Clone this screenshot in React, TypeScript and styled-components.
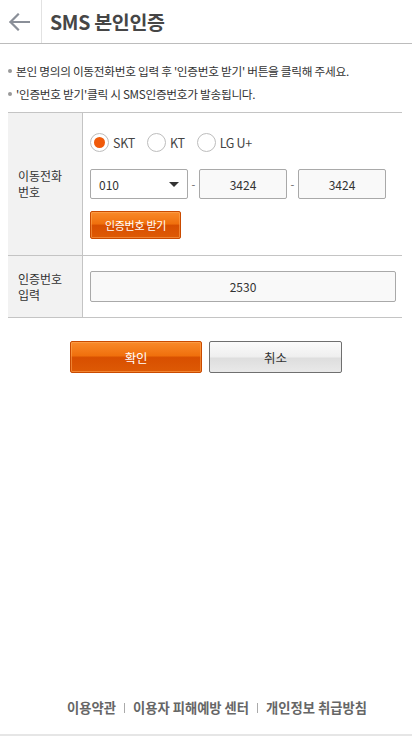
import React from "react";
import styled, { createGlobalStyle } from "styled-components";

const Global = createGlobalStyle`
  html, body { margin: 0; padding: 0; background: #fff; }
  body { font-family: "Noto Sans CJK KR", "Noto Sans", sans-serif; color: #333; }
  * { box-sizing: border-box; }
`;

const Page = styled.div`
  min-height: 736px;
  display: flex;
  flex-direction: column;
`;

const Header = styled.header`
  height: 44px;
  display: flex;
  align-items: stretch;
  border-bottom: 1px solid #bcbcbc;
`;

const Back = styled.button`
  width: 42px;
  border: none;
  border-right: 1px solid #e2e2e2;
  background: none;
  padding: 0 4px 0 0;
  display: flex;
  align-items: center;
  justify-content: center;
`;

const Title = styled.h1`
  margin: 0;
  padding-left: 8px;
  display: flex;
  align-items: center;
  font-size: 19.5px;
  font-weight: 700;
  color: #464646;
  letter-spacing: -0.3px;
`;

const Notes = styled.ul`
  list-style: none;
  margin: 0;
  padding: 15px 8px 0 8px;
`;

const Note = styled.li`
  font-size: 11.7px;
  line-height: 23px;
  color: #333;
  letter-spacing: -0.3px;
  display: flex;
  align-items: center;
  &::before {
    content: "";
    width: 4px;
    height: 4px;
    border-radius: 50%;
    background: #999;
    margin: 0 4px 0 0;
  }
`;

const Table = styled.div`
  margin: 7px 10px 0 8px;
  border-top: 1px solid #c4c4c4;
`;

const Row = styled.div`
  display: grid;
  grid-template-columns: 75px 1fr;
  border-bottom: 1px solid #c4c4c4;
`;

const Label = styled.div`
  background: #f2f2f2;
  border-right: 1px solid #c4c4c4;
  display: flex;
  flex-direction: column;
  justify-content: center;
  padding-left: 10px;
  font-size: 12px;
  line-height: 16px;
  color: #333;
`;

const Cell = styled.div<{ $pad: string }>`
  padding: ${(p) => p.$pad};
  display: flex;
  flex-direction: column;
  align-items: flex-start;
`;

const Radios = styled.div`
  display: flex;
  align-items: center;
  height: 18px;
  margin-bottom: 18px;
`;

const RadioItem = styled.label`
  display: flex;
  align-items: center;
  font-size: 12.5px;
  color: #444;
  margin-right: 12px;
  letter-spacing: -0.3px;
`;

const RadioCircle = styled.span<{ $on?: boolean }>`
  width: 19px;
  height: 19px;
  border-radius: 50%;
  border: 1px solid #bdbdbd;
  background: #fff;
  margin-right: 4px;
  display: flex;
  align-items: center;
  justify-content: center;
  &::after {
    content: "";
    width: 11px;
    height: 11px;
    border-radius: 50%;
    background: ${(p) => (p.$on ? "#f05a0a" : "transparent")};
  }
`;

const PhoneRow = styled.div`
  display: flex;
  align-items: center;
  margin-bottom: 12px;
`;

const Select = styled.div`
  width: 98px;
  height: 30px;
  border: 1px solid #a9a9a9;
  border-radius: 2px;
  background: #fff;
  display: flex;
  align-items: center;
  justify-content: space-between;
  padding: 0 8px 0 8px;
  font-size: 12px;
  color: #333;
`;

const Triangle = styled.span`
  width: 0;
  height: 0;
  border-left: 5px solid transparent;
  border-right: 5px solid transparent;
  border-top: 5px solid #333;
`;

const Dash = styled.span`
  width: 11px;
  text-align: center;
  font-size: 11px;
  color: #666;
`;

const Field = styled.div<{ $w: string; $h: number }>`
  width: ${(p) => p.$w};
  height: ${(p) => p.$h}px;
  border: 1px solid #a9a9a9;
  border-radius: 2px;
  background: #f9f9f9;
  display: flex;
  align-items: center;
  justify-content: center;
  font-size: 12px;
  color: #333;
`;

const OrangeBtn = styled.button<{ $w: number; $h: number; $fs: number }>`
  width: ${(p) => p.$w}px;
  height: ${(p) => p.$h}px;
  border: 1px solid #c94a00;
  border-radius: 2px;
  background: linear-gradient(to bottom, #f98a2a 0%, #f0700d 45%, #d84f00 52%, #de5a05 100%);
  box-shadow: inset 0 0 0 1px rgba(255, 170, 90, 0.55);
  color: #fff;
  font-family: inherit;
  font-size: ${(p) => p.$fs}px;
  padding: 0;
  letter-spacing: -0.3px;
`;

const GrayBtn = styled.button`
  width: 133px;
  height: 32px;
  border: 1px solid #6f6f6f;
  border-radius: 2px;
  background: linear-gradient(to bottom, #fbfbfb 0%, #efefef 48%, #dedede 55%, #e9e9e9 100%);
  color: #333;
  font-family: inherit;
  font-size: 12.5px;
  padding: 0;
`;

const Actions = styled.div`
  display: flex;
  justify-content: center;
  gap: 7px;
  margin-top: 23px;
`;

const Spacer = styled.div`
  flex: 1;
`;

const Footer = styled.footer`
  display: flex;
  justify-content: center;
  align-items: center;
  padding: 0 0 10px 22px;
  border-bottom: 2px solid #e6e6e6;
  height: 45px;
`;

const FootLink = styled.span`
  font-size: 13.3px;
  font-weight: 700;
  color: #666;
  letter-spacing: 0;
`;

const Sep = styled.span`
  width: 1px;
  height: 10px;
  background: #aaa;
  margin: 0 8px;
`;

export default function App() {
  return (
    <Page>
      <Global />
      <Header>
        <Back aria-label="back">
          <svg width="22" height="18" viewBox="0 0 22 18" fill="none">
            <path d="M21 9H2.5M10 1.5L2.5 9L10 16.5" stroke="#8a8f98" strokeWidth="2.2" strokeLinecap="square" />
          </svg>
        </Back>
        <Title>SMS 본인인증</Title>
      </Header>
      <Notes>
        <Note>본인 명의의 이동전화번호 입력 후 '인증번호 받기' 버튼을 클릭해 주세요.</Note>
        <Note>'인증번호 받기'클릭 시 SMS인증번호가 발송됩니다.</Note>
      </Notes>
      <Table>
        <Row>
          <Label><span>이동전화</span><span>번호</span></Label>
          <Cell $pad="20px 0 16px 7px">
            <Radios>
              <RadioItem><RadioCircle $on />SKT</RadioItem>
              <RadioItem><RadioCircle />KT</RadioItem>
              <RadioItem><RadioCircle />LG U+</RadioItem>
            </Radios>
            <PhoneRow>
              <Select>010<Triangle /></Select>
              <Dash>-</Dash>
              <Field $w="88px" $h={30}>3424</Field>
              <Dash>-</Dash>
              <Field $w="88px" $h={30}>3424</Field>
            </PhoneRow>
            <OrangeBtn $w={91} $h={28} $fs={11}>인증번호 받기</OrangeBtn>
          </Cell>
        </Row>
        <Row>
          <Label><span>인증번호</span><span>입력</span></Label>
          <Cell $pad="15px 6px 15px 7px">
            <Field $w="100%" $h={31}>2530</Field>
          </Cell>
        </Row>
      </Table>
      <Actions>
        <OrangeBtn $w={132} $h={32} $fs={12.5}>확인</OrangeBtn>
        <GrayBtn>취소</GrayBtn>
      </Actions>
      <Spacer />
      <Footer>
        <FootLink>이용약관</FootLink>
        <Sep />
        <FootLink>이용자 피해예방 센터</FootLink>
        <Sep />
        <FootLink>개인정보 취급방침</FootLink>
      </Footer>
    </Page>
  );
}
